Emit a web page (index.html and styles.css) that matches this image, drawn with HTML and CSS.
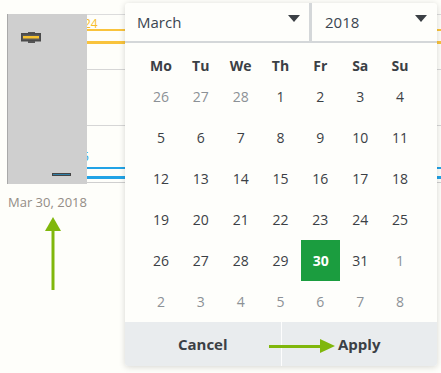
FILE: index.html
```html
<!DOCTYPE html>
<html lang="en">
<head>
    <meta charset="UTF-8">
    <meta name="viewport" content="width=device-width, initial-scale=1.0">
    <title>Date picker</title>
    <link rel="stylesheet" href="styles.css">
</head>
<body>

<div class="scene">
    <div class="widget">
        <div class="panel">
            <svg class="handle" width="20" height="11" viewBox="0 0 20 11">
                <rect x="7" y="0" width="7" height="1.5" fill="#555"/>
                <rect x="9.5" y="0" width="2" height="2" fill="#555"/>
                <rect x="0.75" y="1.75" width="18.5" height="7" fill="#5a5a5a" stroke="#4a4a4a" stroke-width="1.5"/>
                <rect x="2" y="4" width="16" height="2.5" fill="#f7c22e"/>
                <rect x="7" y="9" width="7" height="2" fill="#555"/>
            </svg>
            <div class="dash"></div>
        </div>
        <div class="chart">
            <div class="band yellow-top"><span class="lbl">24</span></div>
            <div class="band yellow-thick"></div>
            <div class="band grey-a"></div>
            <div class="band grey-b"></div>
            <div class="band blue-top"><span class="lbl">5</span></div>
            <div class="band blue-thick"></div>
            <div class="band grey-c"></div>
        </div>
    </div>
    <div class="date-label">Mar 30, 2018</div>

    <div class="picker">
        <div class="selects">
            <div class="select month">March <span class="caret"></span></div>
            <div class="select year">2018 <span class="caret"></span></div>
        </div>
        <div class="cal">
            <div class="dow">Mo</div><div class="dow">Tu</div><div class="dow">We</div><div class="dow">Th</div><div class="dow">Fr</div><div class="dow">Sa</div><div class="dow">Su</div>
            <div class="day other">26</div><div class="day other">27</div><div class="day other">28</div><div class="day">1</div><div class="day">2</div><div class="day">3</div><div class="day">4</div>
            <div class="day">5</div><div class="day">6</div><div class="day">7</div><div class="day">8</div><div class="day">9</div><div class="day">10</div><div class="day">11</div>
            <div class="day">12</div><div class="day">13</div><div class="day">14</div><div class="day">15</div><div class="day">16</div><div class="day">17</div><div class="day">18</div>
            <div class="day">19</div><div class="day">20</div><div class="day">21</div><div class="day">22</div><div class="day">23</div><div class="day">24</div><div class="day">25</div>
            <div class="day">26</div><div class="day">27</div><div class="day">28</div><div class="day">29</div><div class="day selected">30</div><div class="day">31</div><div class="day other">1</div>
            <div class="day other">2</div><div class="day other">3</div><div class="day other">4</div><div class="day other">5</div><div class="day other">6</div><div class="day other">7</div><div class="day other">8</div>
        </div>
        <div class="footer">
            <button class="btn">Cancel</button>
            <button class="btn">Apply</button>
        </div>
    </div>

    <!-- annotation arrows -->
    <svg class="arrow arrow-up" width="16" height="73" viewBox="0 0 16 73">
        <polygon points="8,0 0,14 16,14" fill="#80b70c"/>
        <rect x="6.5" y="12" width="3" height="61" fill="#80b70c"/>
    </svg>
    <svg class="arrow arrow-right" width="66" height="14" viewBox="0 0 66 14">
        <rect x="0" y="6" width="53" height="3" fill="#80b70c"/>
        <polygon points="66,7 51,0 51,14" fill="#80b70c"/>
    </svg>
</div>

</body>
</html>
```

FILE: styles.css
```css
body {
    margin: 0;
    background: #fefefa;
    font-family: "Open Sans", "Noto Sans", sans-serif;
    color: #3b4045;
}
.scene {
    position: relative;
    width: 441px;
    height: 373px;
    overflow: hidden;
}
.widget {
    display: flex;
    padding: 14px 0 0 7px;
}
.panel {
    position: relative;
    width: 79px;
    height: 170px;
    background: #cfcfcf;
    border-left: 1px solid #a9a9a9;
    display: flex;
    flex-direction: column;
    justify-content: space-between;
}
.handle {
    display: block;
    margin: 18px 0 0 13px;
}
.dash {
    width: 19px;
    height: 3px;
    margin: 0 0 8px 44px;
    background: #2f7fa8;
    box-shadow: inset 0 0 0 1px #454545;
}
.chart {
    flex: 1;
    height: 170px;
    border-top: 1px solid #dcdcdc;
    overflow: hidden;
}
.band {
    position: relative;
}
.lbl {
    position: absolute;
    left: -4px;
    bottom: 1px;
    font-size: 12px;
    line-height: 12px;
}
.yellow-top {
    height: 14px;
    border-bottom: 2px solid #f9c33c;
    color: #f7bd2a;
}
.yellow-top .lbl { left: -3px; bottom: -1px; }
.yellow-thick {
    height: 10px;
    border-bottom: 3px solid #f9c33c;
}
.grey-a {
    height: 25px;
    border-bottom: 1px solid #d6d6d6;
}
.grey-b {
    height: 55px;
    border-bottom: 1px solid #d6d6d6;
}
.blue-top {
    height: 41px;
    border-bottom: 2px solid #22a3e6;
    color: #22a3e6;
}
.blue-top .lbl { left: -5px; bottom: 4px; }
.blue-thick {
    height: 7px;
    border-bottom: 3px solid #22a3e6;
}
.grey-c {
    height: 3px;
    border-bottom: 1px solid #cfcfcf;
}
.date-label {
    margin: 8px 0 0 8px;
    font-size: 13px;
    color: #948d86;
}

.picker {
    position: absolute;
    left: 125px;
    top: 3px;
    width: 312px;
    height: 363px;
    background: #fefefb;
    border-radius: 3px;
    box-shadow: 0 1px 6px rgba(0, 0, 0, 0.16);
    overflow: hidden;
    display: flex;
    flex-direction: column;
}
.selects {
    display: flex;
    height: 38px;
    border-bottom: 2px solid #d4d7d9;
}
.select {
    position: relative;
    display: flex;
    align-items: center;
    font-size: 15px;
    color: #3b4550;
}
.month {
    width: 172px;
    padding-left: 12px;
    border-right: 3px solid #d4d7d9;
}
.year {
    flex: 1;
    padding-left: 13px;
}
.caret {
    position: absolute;
    top: 12px;
    width: 0;
    height: 0;
    border-left: 6px solid transparent;
    border-right: 6px solid transparent;
    border-top: 7px solid #3b4045;
}
.month .caret { right: 9px; }
.year .caret { right: 10px; }
.cal {
    display: grid;
    grid-template-columns: repeat(7, 1fr);
    grid-template-rows: 21px repeat(6, 41px);
    padding: 12px 17px 0 16px;
}
.dow {
    display: flex;
    align-items: center;
    justify-content: center;
    font-size: 14px;
    font-weight: 700;
    color: #3b4045;
}
.day {
    display: flex;
    align-items: center;
    justify-content: center;
    font-size: 14px;
    color: #3b4045;
}
.day.other {
    color: #8c9196;
}
.day.selected {
    margin: 0 0 0 1px;
    background: #1b9d3f;
    color: #fff;
    font-weight: 700;
}
.footer {
    flex: 1;
    display: flex;
    background: #e9ecee;
}
.btn {
    flex: 1;
    border: 0;
    background: none;
    font-family: inherit;
    font-size: 15px;
    font-weight: 700;
    color: #3b4045;
    padding: 0;
}
.btn + .btn {
    border-left: 1px solid #fdfdfd;
}

.arrow {
    position: absolute;
    display: block;
}
.arrow-up {
    left: 45px;
    top: 217px;
}
.arrow-right {
    left: 269px;
    top: 339px;
}
```
